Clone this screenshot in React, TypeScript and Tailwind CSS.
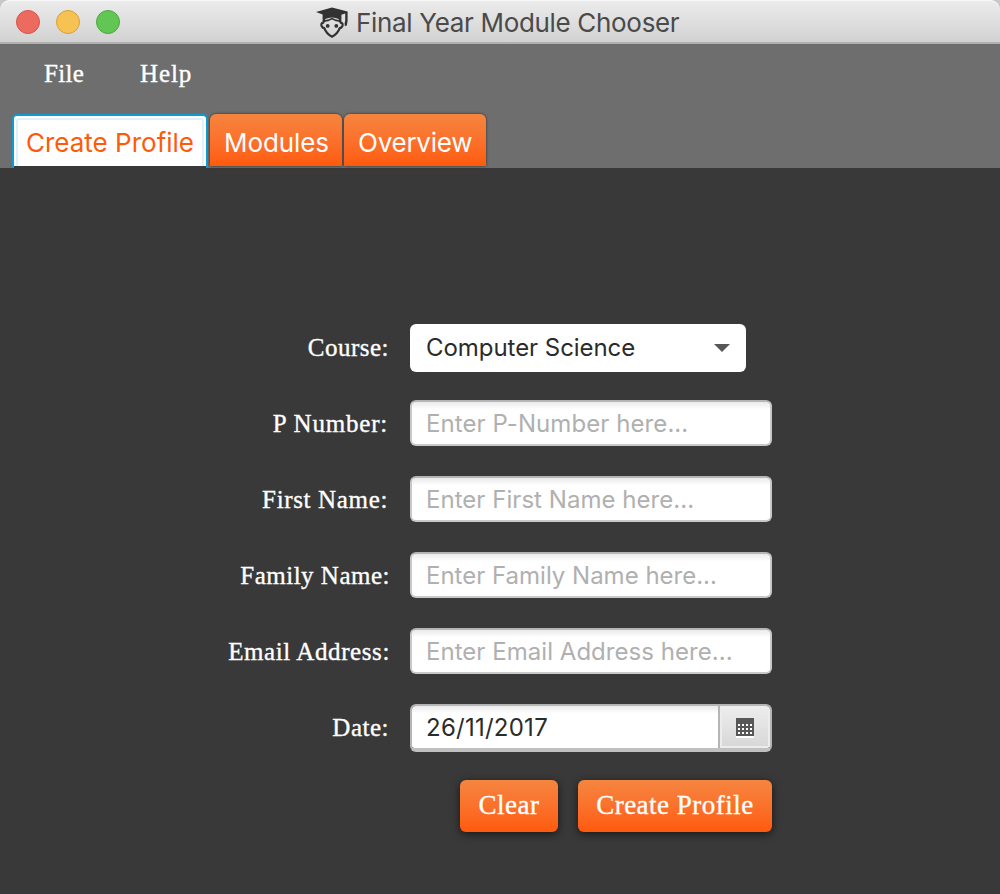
import React from "react";

const SANS = "font-['Inter',sans-serif]";
const SERIF = "font-['Liberation_Serif',serif] [-webkit-text-stroke:0.35px_#fff]";

function GraduateIcon() {
  return (
    <svg width="34" height="34" viewBox="0 0 34 34" className="shrink-0">
      <path d="M1 7 L17 2.4 L32.6 6.6 V16 L31.8 20.6 L29.9 21.2 L29.6 18.5 L30.2 15.5 V8.6 L26.4 9.8 V14 Q17 9.6 7.6 14 V9.6 Z" fill="#323232" />
      <path d="M9 13 L8.4 17.6 Q6 18 6.4 20.2 Q7 22.8 9.3 23.2 Q11.4 29 17 31.7 Q22.6 29 24.7 23.2 Q27 22.8 27.6 20.2 Q28 18 25.6 17.6 L25 13" fill="none" stroke="#323232" strokeWidth="2.2" strokeLinejoin="round" />
      <path d="M9 17 Q13.5 17 17 14.6 Q20.5 17 25 17 L25.5 13 Q17 9 8.5 13 Z" fill="#323232" />
      <path d="M10.2 13.9 Q17 10.9 23.8 13.9 L23.6 14.9 Q20 14.6 17 12.7 Q14 14.6 10.4 14.9 Z" fill="#dedede" />
      <circle cx="12.7" cy="20.9" r="1.9" fill="#323232" />
      <circle cx="21.3" cy="20.9" r="1.9" fill="#323232" />
    </svg>
  );
}

function CalendarIcon() {
  return (
    <svg width="18" height="20" viewBox="0 0 18 20" shapeRendering="crispEdges">
      <rect y="2" width="18" height="18" fill="#fff" />
      <rect width="18" height="18" fill="#575757" />
      {[6, 10, 14].map((y) =>
        [2, 6, 10, 14].map((x) => <rect key={`${x}-${y}`} x={x} y={y} width="2" height="2" fill="#fff" />)
      )}
    </svg>
  );
}

const fields = [
  { label: "P Number:", hint: "Enter P-Number here...", pad: "pr-[2px]", lt: "tracking-[0.8px]", ht: "tracking-[0.08px]" },
  { label: "First Name:", hint: "Enter First Name here...", pad: "pr-[2px]", lt: "tracking-[0.65px]", ht: "tracking-[0.04px]" },
  { label: "Family Name:", hint: "Enter Family Name here...", pad: "pr-0", lt: "tracking-[0.5px]", ht: "tracking-[0px]" },
  { label: "Email Address:", hint: "Enter Email Address here...", pad: "pr-0", lt: "tracking-[0.6px]", ht: "tracking-[0.04px]" },
];

function Label({ text, className }: { text: string; className: string }) {
  return (
    <div className={`w-[390px] text-right text-[25px] leading-[48px] text-white whitespace-nowrap ${SERIF} ${className}`}>{text}</div>
  );
}

export default function App() {
  return (
    <div className={`flex h-[894px] w-[1000px] flex-col overflow-hidden bg-[#393939] text-[24px] ${SANS}`}>
      <div className="h-[44px] bg-[#c8c8c8]">
        <header className="flex h-[44px] rounded-t-[10px] border-b-2 border-[#b0b0b0] bg-linear-to-b from-[#ececec] to-[#d2d2d2] shadow-[inset_0_1px_0_#f8f8f8]">
          <div className="flex w-[315px] gap-4 pt-[10px] pl-4">
            <i className="size-6 rounded-full border border-[#d5554d] bg-[#ed6a5f]" />
            <i className="size-6 rounded-full border border-[#d8a03e] bg-[#f6c251]" />
            <i className="size-6 rounded-full border border-[#4fa73f] bg-[#62c655]" />
          </div>
          <div className="flex pt-[5px]">
            <GraduateIcon />
            <h1 className="pl-[7px] text-[26px] leading-[36px] tracking-[-0.32px] whitespace-nowrap text-[#4a4a4a]">Final Year Module Chooser</h1>
          </div>
        </header>
      </div>

      <div className="flex h-[124px] flex-col bg-[#6e6e6e]">
        <nav className={`flex h-[70px] pt-[14px] pl-[44px] text-[25px] leading-[32px] text-white ${SERIF}`}>
          <span className="w-24 tracking-[0.3px]">File</span>
          <span className="tracking-[0.9px]">Help</span>
        </nav>
        <div className="flex h-[54px] pl-3 text-[26px] leading-[58px] whitespace-nowrap text-white">
          <div className="h-[54px] w-[196px] rounded-t-[5px] border-2 border-b-0 border-[#0d9bd1] bg-linear-to-b from-white from-[50px] to-[#393939] to-[50px] p-[2px_2px_0]">
            <div className="h-[48px] rounded-t-[3px] border-2 border-b-0 border-[#def2f9] pl-[8px] leading-[46px] text-[#ff5a0a]">Create Profile</div>
          </div>
          <div className="ml-[2px] h-[52px] w-[132px] rounded-t-[6px] bg-linear-to-b from-[#f5853f] to-[#ff5a0a] pl-[14px] tracking-[-0.1px] shadow-[0_0_3px_rgba(0,0,0,0.6)]">Modules</div>
          <div className="ml-[2px] h-[52px] w-[142px] rounded-t-[6px] bg-linear-to-b from-[#f5853f] to-[#ff5a0a] pl-[14px] tracking-[-0.25px] shadow-[0_0_3px_rgba(0,0,0,0.6)]">Overview</div>
        </div>
      </div>

      <main className="flex flex-col pt-[156px]">
        <div className="flex h-[76px]">
          <Label text="Course:" className="pr-[1px] tracking-[0.5px]" />
          <div className="ml-5 flex h-12 w-[336px] justify-between rounded-[6px] bg-white pr-4 pl-4 text-[#2b2b2b]">
            <span className="leading-[48px] tracking-[-0.05px]">Computer Science</span>
            <svg width="16" height="8" viewBox="0 0 16 8" className="mt-5"><path d="M0 0H16L8 8Z" fill="#575757" /></svg>
          </div>
        </div>
        {fields.map((f) => (
          <div key={f.label} className="flex h-[76px]">
            <Label text={f.label} className={`${f.pad} ${f.lt}`} />
            <div className={`ml-5 h-[46px] w-[362px] rounded-[6px] border-2 border-[#c8c8c8] border-t-[#b5b5b5] bg-white bg-linear-to-b from-[#ebebeb] via-white via-[18%] to-white pl-[14px] leading-[44px] whitespace-nowrap text-[#b0b0b0] ${f.ht}`}>{f.hint}</div>
          </div>
        ))}
        <div className="flex h-[76px]">
          <Label text="Date:" className="pr-[1px] tracking-[0.5px]" />
          <div className="ml-5 flex h-[48px] w-[362px] overflow-hidden rounded-[6px] border-2 border-b-4 border-[#b5b5b5] border-b-[#c0c0c0]">
            <div className="w-[308px] border-r-2 border-[#b5b5b5] bg-linear-to-b from-[#ebebeb] via-white via-[18%] to-white pl-[14px] leading-[44px] tracking-[0.25px] text-[#2b2b2b]">26/11/2017</div>
            <div className="flex w-[50px] justify-center border-2 border-[#ececec] bg-linear-to-b from-[#ececec] to-[#d8d8d8] pt-[10px]"><CalendarIcon /></div>
          </div>
        </div>
        <div className={`ml-[460px] flex gap-5 text-[27px] tracking-[0.5px] whitespace-nowrap text-white ${SERIF}`}>
          <button className="h-[52px] w-[98px] rounded-[6px] bg-linear-to-b from-[#f5853f] to-[#ff5a0a] pb-[2px] leading-[50px] shadow-[0_2px_8px_rgba(0,0,0,0.6)]">Clear</button>
          <button className="h-[52px] w-[194px] rounded-[6px] bg-linear-to-b from-[#f5853f] to-[#ff5a0a] pb-[2px] leading-[50px] shadow-[0_2px_8px_rgba(0,0,0,0.6)]">Create Profile</button>
        </div>
      </main>
    </div>
  );
}
